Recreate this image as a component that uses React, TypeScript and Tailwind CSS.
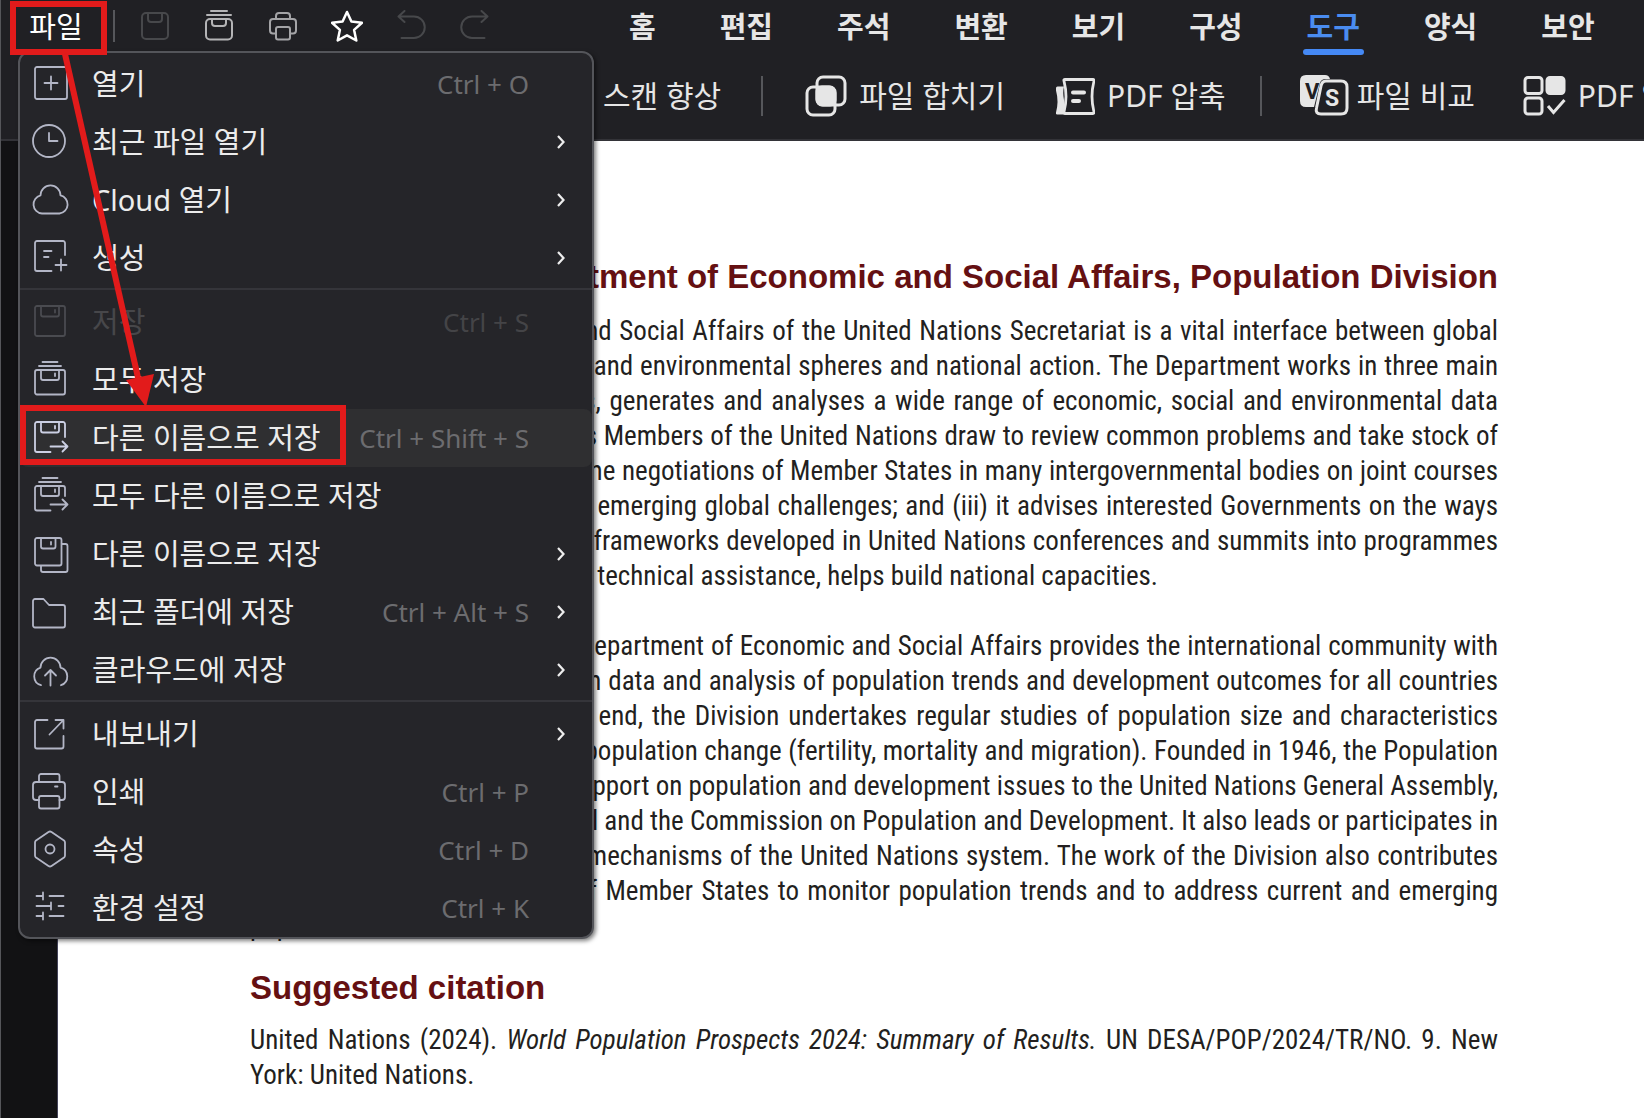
import type { ReactNode } from "react";
import clsx from "clsx";

type MenuEntry = {
  label: string;
  icon: ReactNode;
  shortcut?: string;
  submenu?: boolean;
  disabled?: boolean;
  active?: boolean;
};

function MenuIcon({ children }: { children: ReactNode }) {
  return (
    <svg
      width="40"
      height="40"
      viewBox="0 0 40 40"
      fill="none"
      stroke="currentColor"
      strokeWidth="1.8"
      strokeLinecap="round"
      strokeLinejoin="round"
      className="shrink-0"
      aria-hidden="true"
    >
      {children}
    </svg>
  );
}

function QuickIcon({ children }: { children: ReactNode }) {
  return (
    <svg
      width="32"
      height="32"
      viewBox="0 0 32 32"
      fill="none"
      stroke="currentColor"
      strokeWidth="2"
      strokeLinecap="round"
      strokeLinejoin="round"
      aria-hidden="true"
    >
      {children}
    </svg>
  );
}

const groups: MenuEntry[][] = [
  [
    {
      label: "열기",
      shortcut: "Ctrl + O",
      icon: (
        <>
          <rect x="5" y="3" width="32" height="32" rx="2" />
          <path d="M21 12.5v13M14.5 19h13" />
        </>
      ),
    },
    {
      label: "최근 파일 열기",
      submenu: true,
      icon: (
        <>
          <circle cx="19" cy="19" r="16" />
          <path d="M19 11v8h8.5" />
        </>
      ),
    },
    {
      label: "Cloud 열기",
      submenu: true,
      icon: <path d="M12 33.5A9.2 9.2 0 0 1 10.5 15.4A9.6 9.6 0 0 1 30.5 15.4A9.2 9.2 0 0 1 29.5 33.5Z" />,
    },
    {
      label: "생성",
      submenu: true,
      icon: (
        <>
          <path d="M35 17V5a2 2 0 0 0-2-2H7a2 2 0 0 0-2 2v26a2 2 0 0 0 2 2h14.5" />
          <path d="M14 13h7.5M14 19h4.5M31 21.5v11M25.5 27h11" />
        </>
      ),
    },
  ],
  [
    {
      label: "저장",
      shortcut: "Ctrl + S",
      disabled: true,
      icon: (
        <>
          <rect x="5" y="4" width="30" height="30" rx="2" />
          <path d="M11 4v8.5a2 2 0 0 0 2 2h14a2 2 0 0 0 2-2V4M25 8v2.5" />
        </>
      ),
    },
    {
      label: "모두 저장",
      icon: (
        <>
          <rect x="5" y="10" width="30" height="24.5" rx="2" />
          <path d="M12.5 2h15M9 6h22M11 10v8a2 2 0 0 0 2 2h14a2 2 0 0 0 2-2v-8M25 13.5v2.5" />
        </>
      ),
    },
    {
      label: "다른 이름으로 저장",
      shortcut: "Ctrl + Shift + S",
      active: true,
      icon: (
        <>
          <path d="M35 19V6a2 2 0 0 0-2-2H7a2 2 0 0 0-2 2v26a2 2 0 0 0 2 2h13.5" />
          <path d="M11 4v8.5a2 2 0 0 0 2 2h14a2 2 0 0 0 2-2V4M25 8v2.5M20.5 28.5H37.5M32.5 23.5l5 5-5 5" />
        </>
      ),
    },
    {
      label: "모두 다른 이름으로 저장",
      icon: (
        <>
          <path d="M35 20v-8a2 2 0 0 0-2-2H7a2 2 0 0 0-2 2v20.5a2 2 0 0 0 2 2h13.5M12.5 2h15M9 6h22" />
          <path d="M11 10v8a2 2 0 0 0 2 2h14a2 2 0 0 0 2-2v-8M25 13.5v2.5M20.5 28.5H37.5M32.5 23.5l5 5-5 5" />
        </>
      ),
    },
    {
      label: "다른 이름으로 저장",
      submenu: true,
      icon: (
        <>
          <rect x="5" y="4" width="26.5" height="27.5" rx="2" />
          <path d="M11 4v8.5a2 2 0 0 0 2 2h10.5a2 2 0 0 0 2-2V4M21 8v2.5M32 10h3.5a2 2 0 0 1 2 2v24a2 2 0 0 1-2 2H13a2 2 0 0 1-2-2v-4" />
        </>
      ),
    },
    {
      label: "최근 폴더에 저장",
      shortcut: "Ctrl + Alt + S",
      submenu: true,
      icon: <path d="M3 9a2 2 0 0 1 2-2h8.5l5.5 6h14a2 2 0 0 1 2 2v18.5a2 2 0 0 1-2 2H5a2 2 0 0 1-2-2Z" />,
    },
    {
      label: "클라우드에 저장",
      submenu: true,
      icon: (
        <>
          <path d="M11 35.2A9.2 9.2 0 0 1 10.5 17.6A9.6 9.6 0 0 1 30.5 17.6A9.2 9.2 0 0 1 31 35.2" />
          <path d="M20.5 35.5V20.5M15 25.5l5.5-5.5 5.5 5.5" />
        </>
      ),
    },
  ],
  [
    {
      label: "내보내기",
      submenu: true,
      icon: (
        <>
          <path d="M17.5 6H7a2 2 0 0 0-2 2v24.5a2 2 0 0 0 2 2h24.5a2 2 0 0 0 2-2V22" />
          <path d="M25.5 6h8v8.5M33 6.5L19.5 20.5" />
        </>
      ),
    },
    {
      label: "인쇄",
      shortcut: "Ctrl + P",
      icon: (
        <>
          <path d="M9 10V4a2 2 0 0 1 2-2h16.5a2 2 0 0 1 2 2v6" />
          <path d="M9 28H6a3 3 0 0 1-3-3V13a3 3 0 0 1 3-3h26a3 3 0 0 1 3 3v12a3 3 0 0 1-3 3h-2.5M25 14.5h2.5" />
          <rect x="9" y="24" width="20.5" height="12.5" rx="2" />
        </>
      ),
    },
    {
      label: "속성",
      shortcut: "Ctrl + D",
      icon: (
        <>
          <path d="M18.5 2q1.5-1 3 0L34 10.5q1 .8 1 2v13q0 1.2-1 2L21.5 36q-1.5 1-3 0L6 27.5q-1-.8-1-2v-13q0-1.2 1-2Z" />
          <circle cx="20" cy="19" r="4.5" />
        </>
      ),
    },
    {
      label: "환경 설정",
      shortcut: "Ctrl + K",
      icon: (
        <path d="M6.5 8H13M13 4.5v7M19.5 8H33.5M6.5 18H21M21 14.5v7M28.5 18h5M6.5 28H13M13 24.5v7M19.5 28h14" />
      ),
    },
  ],
];

const quickActions = [
  {
    label: "저장",
    color: "text-[#47484b]",
    icon: (
      <>
        <rect x="3" y="3" width="26" height="26" rx="4" />
        <path d="M9 3v6a3 3 0 0 0 3 3h8a3 3 0 0 0 3-3V3" />
      </>
    ),
  },
  {
    label: "모두 저장",
    color: "text-[#b4b4b6]",
    icon: (
      <>
        <rect x="3" y="9" width="26" height="20.5" rx="4" />
        <path d="M8 1h16M4 5h24M9 9v4a3 3 0 0 0 3 3h8a3 3 0 0 0 3-3V9" />
      </>
    ),
  },
  {
    label: "인쇄",
    color: "text-[#a4a4a7]",
    icon: (
      <>
        <path d="M9 9V6a3 3 0 0 1 3-3h8a3 3 0 0 1 3 3v3" />
        <path d="M9 23.5H6a3 3 0 0 1-3-3V12a3 3 0 0 1 3-3h20a3 3 0 0 1 3 3v8.5a3 3 0 0 1-3 3h-3" />
        <rect x="9" y="17" width="14" height="12.5" rx="2" />
      </>
    ),
  },
  {
    label: "즐겨찾기",
    color: "text-white",
    icon: (
      <path
        d="M16 2l4.4 9.6 10.6 1.2-7.9 7.1 2.2 10.6-9.3-5.2-9.3 5.2 2.2-10.6L1 12.8l10.6-1.2z"
        strokeWidth="2.5"
      />
    ),
  },
  {
    label: "실행 취소",
    color: "text-[#47484b]",
    icon: <path d="M9.5 1L3.5 6.5l6 5.5M3.5 6.5H19a10.5 10.5 0 0 1 0 21.5H6.5" />,
  },
  {
    label: "다시 실행",
    color: "text-[#47484b]",
    icon: <path d="M22.5 1l6 5.5-6 5.5M28.5 6.5H13a10.5 10.5 0 0 0 0 21.5h12.5" />,
  },
];

const tabs = ["홈", "편집", "주석", "변환", "보기", "구성", "도구", "양식", "보안"];

const firstParagraph = [
  "The Department of Economic and Social Affairs of the United Nations Secretariat is a vital interface between global",
  "policies in the economic, social and environmental spheres and national action. The Department works in three main",
  "interlinked areas: (i) it compiles, generates and analyses a wide range of economic, social and environmental data",
  "and information on which States Members of the United Nations draw to review common problems and take stock of",
  "policy options; (ii) it facilitates the negotiations of Member States in many intergovernmental bodies on joint courses",
  "of action to address ongoing or emerging global challenges; and (iii) it advises interested Governments on the ways",
  "and means of translating policy frameworks developed in United Nations conferences and summits into programmes",
  "at the country level and, through technical assistance, helps build national capacities.",
];

const secondParagraph = [
  "The Population Division of the Department of Economic and Social Affairs provides the international community with",
  "timely and accessible population data and analysis of population trends and development outcomes for all countries",
  "and areas of the world. To this end, the Division undertakes regular studies of population size and characteristics",
  "and of all three components of population change (fertility, mortality and migration). Founded in 1946, the Population",
  "Division provides substantive support on population and development issues to the United Nations General Assembly,",
  "the Economic and Social Council and the Commission on Population and Development. It also leads or participates in",
  "many interagency coordination mechanisms of the United Nations system. The work of the Division also contributes",
  "to strengthening the capacity of Member States to monitor population trends and to address current and emerging",
  "population issues.",
];

function Paragraph({ lines }: { lines: string[] }) {
  return (
    <p>
      {lines.map((line, i) => (
        <span
          key={line}
          className={clsx("block whitespace-nowrap", i < lines.length - 1 && "[text-align-last:justify]")}
        >
          {line}
        </span>
      ))}
    </p>
  );
}

function Chevron() {
  return (
    <svg width="12" height="16" viewBox="0 0 12 16" fill="none" stroke="#ededed" strokeWidth="2.2" aria-hidden="true">
      <path d="M3 2l5.5 6L3 14" />
    </svg>
  );
}

function FileMenu() {
  return (
    <div
      role="menu"
      className="absolute left-[17px] top-[51px] w-[576px] rounded-xl border-2 border-[#54555a] bg-[#252529] pt-[2px] shadow-[2px_2px_4px_rgba(0,0,0,0.5)]"
    >
      {groups.map((group, g) => (
        <div key={g} className={clsx(g > 0 && "mt-[1px] border-t-2 border-[#35353a] pt-[3px]")}>
          {group.map((item, i) => (
            <button
              key={i}
              type="button"
              role="menuitem"
              disabled={item.disabled}
              className={clsx(
                "flex h-[58px] w-full items-center rounded-lg pl-[10px] pr-[25px] text-left text-[29px]",
                item.active && "bg-[#2f2f31]",
                item.disabled ? "text-[#47474a]" : "text-[#ececec]"
              )}
            >
              <span className={item.disabled ? "text-[#4a4b50]" : item.active ? "text-[#ccd0e4]" : "text-[#b3b6c6]"}>
                <MenuIcon>{item.icon}</MenuIcon>
              </span>
              <span className="ml-[22px] flex-1 whitespace-nowrap">{item.label}</span>
              {item.shortcut && (
                <span className={clsx("text-[26px]", item.disabled ? "text-[#444447]" : "text-[#6c6c6f]")}>
                  {item.shortcut}
                </span>
              )}
              <span className="ml-[26px] flex w-3 justify-center">{item.submenu && <Chevron />}</span>
            </button>
          ))}
        </div>
      ))}
    </div>
  );
}

function Tool({ label, children }: { label: string; children?: ReactNode }) {
  return (
    <button type="button" className="flex shrink-0 items-center gap-3 whitespace-nowrap">
      {children}
      {label}
    </button>
  );
}

function Toolbar() {
  return (
    <div className="flex h-[83px] items-center overflow-hidden pb-1 pl-[602px] text-[30px] text-[#e6e6e6]">
      <Tool label="스캔 향상" />
      <div className="ml-10 h-10 w-[2px] shrink-0 bg-[#56575b]" />
      <div className="ml-[42px] flex gap-[50px]">
        <Tool label="파일 합치기">
          <svg width="42" height="42" viewBox="0 0 42 42" fill="none" stroke="#e6e6e6" strokeWidth="3">
            <rect x="12" y="2" width="28" height="28" rx="6" />
            <rect x="2" y="12" width="28" height="28" rx="6" />
            <rect x="12" y="12" width="18" height="18" rx="5" fill="#e6e6e6" />
          </svg>
        </Tool>
        <Tool label="PDF 압축">
          <svg width="40" height="42" viewBox="0 0 40 42" fill="none">
            <path d="M1 13q0-1.5 1.5-1.5H9q-1.5 6 0 13.5t-.5 14.5H2q-1.5 0-1-2 3-11 0-22z" fill="#e6e6e6" />
            <path
              d="M10 4.5h28q1.5 0 1 1.5-4 15.5 0 31 .5 1.5-1 1.5H10q-1.5 0-1-1.5 4-15.5 0-31-.5-1.5 1-1.5z"
              fill="#202024"
              stroke="#e6e6e6"
              strokeWidth="2.8"
            />
            <path d="M18 17.5h11M18 26h6" stroke="#e6e6e6" strokeWidth="4" strokeLinecap="round" />
          </svg>
        </Tool>
      </div>
      <div className="ml-[34px] h-10 w-[2px] shrink-0 bg-[#56575b]" />
      <div className="ml-[38px] flex gap-12">
        <Tool label="파일 비교">
          <svg width="49" height="42" viewBox="0 0 49 42" className="-mr-1">
            <path d="M6 0h19q4 0 5 4h-4q-5 0-6 4l-6 24H6q-6 0-6-6V6q0-6 6-6z" fill="#e6e6e6" />
            <path
              d="M26 6h15q6 0 6 6v21q0 6-6 6H21q-6 0-4.5-6l4.5-22q1-5 5-5z"
              fill="#202024"
              stroke="#e6e6e6"
              strokeWidth="3"
            />
            <text x="5" y="24" fill="#202024" fontSize="22" fontWeight="700" fontFamily="Roboto, sans-serif">
              V
            </text>
            <text x="25" y="31" fill="#e6e6e6" fontSize="23" fontWeight="700" fontFamily="Roboto, sans-serif">
              S
            </text>
          </svg>
        </Tool>
        <Tool label="PDF 일괄 처리">
          <svg width="43" height="42" viewBox="0 0 43 42" fill="none" stroke="#e6e6e6" strokeWidth="3">
            <rect x="2" y="2.5" width="17" height="16" rx="3" />
            <rect x="24" y="2.5" width="17" height="16" rx="3" fill="#e6e6e6" />
            <rect x="2" y="23" width="17" height="16" rx="3" />
            <path d="M25 31l5.5 6.5L41.5 25" />
          </svg>
        </Tool>
      </div>
    </div>
  );
}

export default function App() {
  return (
    <div className="relative flex min-h-screen flex-col overflow-hidden border-l border-[#55565a] bg-[#121214] font-['Noto_Sans','Noto_Sans_CJK_KR',sans-serif]">
      <header className="border-b-2 border-[#333338] bg-[#202024]">
        <div className="flex h-14 items-start">
          <button type="button" className="ml-[28px] h-[54px] w-[54px] whitespace-nowrap text-[29px] leading-[54px] text-white">
            파일
          </button>
          <div className="ml-[30px] mt-[10px] h-8 w-[2px] bg-[#56575b]" />
          <div className="ml-6 flex h-[52px] items-center gap-8">
            {quickActions.map((action) => (
              <button key={action.label} type="button" aria-label={action.label} className={action.color}>
                <QuickIcon>{action.icon}</QuickIcon>
              </button>
            ))}
          </div>
          <nav className="ml-[134px] flex gap-[56px] text-[29px] font-bold text-[#e6e6e6]">
            {tabs.map((tab) => (
              <button key={tab} type="button" className={clsx("whitespace-nowrap", tab === "도구" && "text-[#4a8cf0]")}>
                <span className="block h-[49px] px-1 leading-[54px]">{tab}</span>
                <span className={clsx("block h-[6px] rounded-full", tab === "도구" && "bg-[#4589f5]")} />
              </button>
            ))}
          </nav>
        </div>
        <Toolbar />
      </header>

      <div className="flex flex-1">
        <aside className="w-[57px] shrink-0 border-r border-[#44445a]" />
        <main className="min-w-0 flex-1 bg-white pl-[192px] pr-[146px] pt-[116px] font-['Roboto_Condensed',Roboto,sans-serif] text-[27px] leading-[35px] text-[#231f20]">
          <h2 className="whitespace-nowrap font-['Liberation_Sans',sans-serif] text-[33px] font-bold leading-10 text-[#651012] [text-align-last:right]">
            Department of Economic and Social Affairs, Population Division
          </h2>
          <div className="mt-[17px] flex flex-col gap-[35px]">
            <Paragraph lines={firstParagraph} />
            <Paragraph lines={secondParagraph} />
          </div>
          <h2 className="mt-6 font-['Liberation_Sans',sans-serif] text-[33px] font-bold leading-10 text-[#651012]">
            Suggested citation
          </h2>
          <p className="mt-[15px]">
            <span className="block whitespace-nowrap [text-align-last:justify]">
              United Nations (2024). <i>World Population Prospects 2024: Summary of Results.</i> UN DESA/POP/2024/TR/NO. 9. New
            </span>
            <span className="block">York: United Nations.</span>
          </p>
        </main>
      </div>

      <FileMenu />

      {/* Callouts: file button, arrow, save-as entry */}
      <svg
        className="pointer-events-none absolute left-0 top-0"
        width="360"
        height="480"
        viewBox="0 0 360 480"
        fill="none"
        stroke="#e21b1b"
        strokeWidth="6"
        aria-hidden="true"
      >
        <rect x="12" y="4" width="91" height="48" />
        <path d="M64 54L138 382" />
        <path d="M125 380L153 374L145 407Z" fill="#e21b1b" stroke="none" />
        <rect x="22" y="408" width="320" height="54" />
      </svg>
    </div>
  );
}
